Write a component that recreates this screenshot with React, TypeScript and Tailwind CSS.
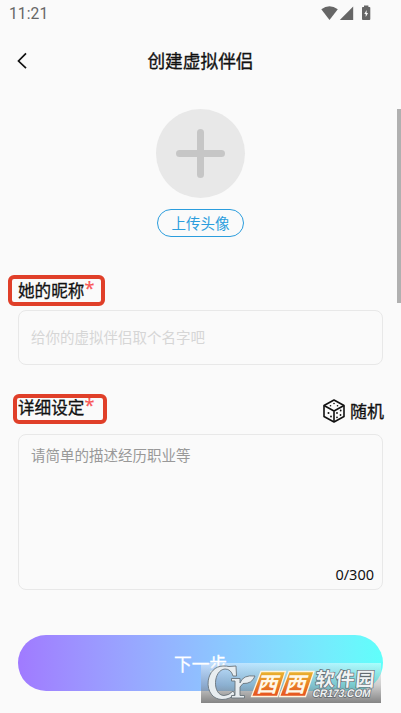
import type { ReactNode } from "react";

function StatusBar() {
  return (
    <div className="flex h-7 items-start justify-between pt-[5px] pr-[30px] pl-[9px] text-[#666]">
      <span className="font-[Roboto,sans-serif] text-[15.6px] leading-[18px] tracking-[0.1px]">11:21</span>
      <svg className="h-[18px] w-[50px]" viewBox="0 0 50 18" fill="#666">
        <path d="M0.3 4.2Q8.5-1.6 16.8 4.2L8.5 15Z" />
        <path d="M32.2 1.6V15H18.8Z" />
        <path d="M43 0.6h4.4v1.3h1.1q.8 0 .8.8v11.4q0 .9-.9.9h-6.5q-.9 0-.9-.9V2.7q0-.8.8-.8H43z" />
        <path d="M45.600 5l-2.300 4h1.400v3l2.400-4H45.600z" fill="#fafafa" />
      </svg>
    </div>
  );
}

function Label({ children, className }: { children: ReactNode; className: string }) {
  return (
    <div className={`flex rounded-[6px] border-4 border-[#e03f29] text-[16.6px] text-[#111] ${className}`}>
      <span className="[-webkit-text-stroke:0.3px_currentColor]">{children}</span>
      <span className="-mt-[2px] font-['Noto_Sans',sans-serif] text-[18px] text-[#f85656] [-webkit-text-stroke:0.2px_currentColor]">*</span>
    </div>
  );
}

function Dice() {
  return (
    <svg className="h-6 w-[22px]" viewBox="0 0 22 24" fill="none" stroke="#111" strokeWidth="1.6" strokeLinejoin="round">
      <path d="M11 1L21 6.5V17.5L11 23L1 17.5V6.5Z" />
      <path d="M1 6.5L11 12L21 6.5M11 12V23" />
      <g fill="#111" stroke="none">
        <circle cx="11" cy="4.5" r=".8" /><circle cx="7.5" cy="6.7" r=".8" /><circle cx="14.5" cy="6.7" r=".8" />
        <circle cx="5.5" cy="14" r="1" /><circle cx="8" cy="17.5" r=".9" />
        <circle cx="17.7" cy="11.5" r=".9" /><circle cx="14" cy="14" r=".9" /><circle cx="17.5" cy="16" r=".9" /><circle cx="14" cy="18.3" r=".9" />
      </g>
    </svg>
  );
}

function Watermark() {
  return (
    <div className="absolute top-[663px] left-[201px] h-10 w-[180px] bg-linear-to-b from-[#ffffff73] via-[#8c8c8c66] via-55% to-[#707070d9]">
      <svg className="h-10 w-[180px]" viewBox="0 0 180 40">
        <defs>
          <linearGradient id="orange" x1="0" y1="0" x2="0" y2="1">
            <stop stopColor="#e9b52f" />
            <stop offset="1" stopColor="#e6501f" />
          </linearGradient>
        </defs>
        <g fill="#e8edf0" stroke="#69747c" strokeWidth=".9" strokeLinejoin="round">
          <path d="M28 3.5L35 3L35.500 13H32Q30 6 24 6C12 7 11 32 23 32.500Q28 32.500 32 28L34 31Q29 36.500 21 36.500C1.500 36 3 3.500 22 3Q26 3 28 3.500Z" />
          <path d="M30.500 15.500H39V20Q42 11.500 54 13Q51 21 42 20.500L39 24V32.500H43.500V35H30.500V32.500H34V18H30.500Z" />
        </g>
        <g fill="url(#orange)" stroke="#fff4df" strokeWidth="1.3">
          <path d="M60 8.500H84.500L76.500 33.500H50.500Z" />
          <path d="M88 8.500H113L104.500 33.500H78.500Z" />
        </g>
        <g fill="#fff8e8" fontFamily="Noto Sans CJK SC, sans-serif" fontSize="21" fontWeight="700">
          <text transform="translate(55 29) skewX(-16)">西</text>
          <text transform="translate(83 29) skewX(-16)">西</text>
        </g>
        <g fill="#f0f3f4" stroke="#626a70" strokeWidth="1.4" paintOrder="stroke" fontWeight="700">
          <text transform="translate(114 22.500) skewX(-5)" fontFamily="Noto Sans CJK SC, sans-serif" fontSize="19" textLength="59">软件园</text>
          <text transform="translate(111 33.500) skewX(-12)" fontFamily="Liberation Sans, sans-serif" fontSize="11" textLength="58" lengthAdjust="spacingAndGlyphs">CR173.COM</text>
        </g>
      </svg>
    </div>
  );
}

export default function App() {
  return (
    <div className="relative flex h-[713px] w-full flex-col overflow-hidden bg-[#fafafa] font-['Noto_Sans_CJK_SC',sans-serif] text-[#111]">
      <StatusBar />
      <header className="relative flex h-[66px] items-center justify-center pb-[2px]">
        <svg className="absolute top-6 left-[17px] h-[18px] w-3" viewBox="0 0 12 18" fill="none" stroke="#111" strokeWidth="1.7">
          <path d="M9 1.3L1.5 9L9 16.2" />
        </svg>
        <h1 className="text-[17.7px] leading-6 [-webkit-text-stroke:0.32px_currentColor]">创建虚拟伴侣</h1>
      </header>

      <section className="flex flex-col items-center pt-[15px]">
        <div className="flex size-[89px] items-center justify-center rounded-full bg-[#e8e8e8]">
          <svg className="size-[49px]" viewBox="0 0 49 49" stroke="#c6c6c6" strokeWidth="7" strokeLinecap="round">
            <path d="M24.5 3.5v42M3.5 24.5h42" />
          </svg>
        </div>
        <button className="mt-[11px] flex h-7 w-[87px] items-center justify-center rounded-full border border-[#2b9ddd] text-[14.5px] leading-5 text-[#2b9ddd]">上传头像</button>
      </section>

      <section className="flex flex-col pt-[38px]">
        <Label className="ml-2 h-[31px] w-[97px] pl-[6px] leading-[22px]">她的昵称</Label>
        <div className="mx-[18px] mt-1 flex h-[55px] items-center rounded-lg border border-[#e8e8e8] pb-[2px] pl-3 text-[14.5px] text-[#d6d6d6]">给你的虚拟伴侣取个名字吧</div>
      </section>

      <section className="flex flex-col pt-7">
        <div className="flex h-8 items-start justify-between pt-px pr-[17px]">
          <Label className="ml-[13px] h-[30px] w-[94px] pl-px leading-[18px]">详细设定</Label>
          <div className="flex items-center gap-[5px] pt-[5px] text-[17px] leading-6 [-webkit-text-stroke:0.3px_currentColor]">
            <Dice />
            <span>随机</span>
          </div>
        </div>
        <div className="mx-[18px] mt-[9px] flex h-[156px] flex-col justify-between rounded-lg border border-[#e8e8e8] pt-[9px] pr-2 pb-[5px] pl-3 text-[14.5px] leading-[21px]">
          <span className="text-[#999]">请简单的描述经历职业等</span>
          <span className="self-end font-['Noto_Sans',sans-serif] text-[14.5px] leading-5">0/300</span>
        </div>
      </section>

      <button className="mx-[18px] mt-[45px] flex h-14 items-center justify-center rounded-full bg-linear-to-r from-[#a07aff] to-[#5ffffb] text-[17.7px] text-white [-webkit-text-stroke:0.3px_currentColor]">下一步</button>
      <div className="absolute top-[109px] right-0 h-[194px] w-[4.5px] bg-[#b0b0b0]" />
      <Watermark />
    </div>
  );
}
